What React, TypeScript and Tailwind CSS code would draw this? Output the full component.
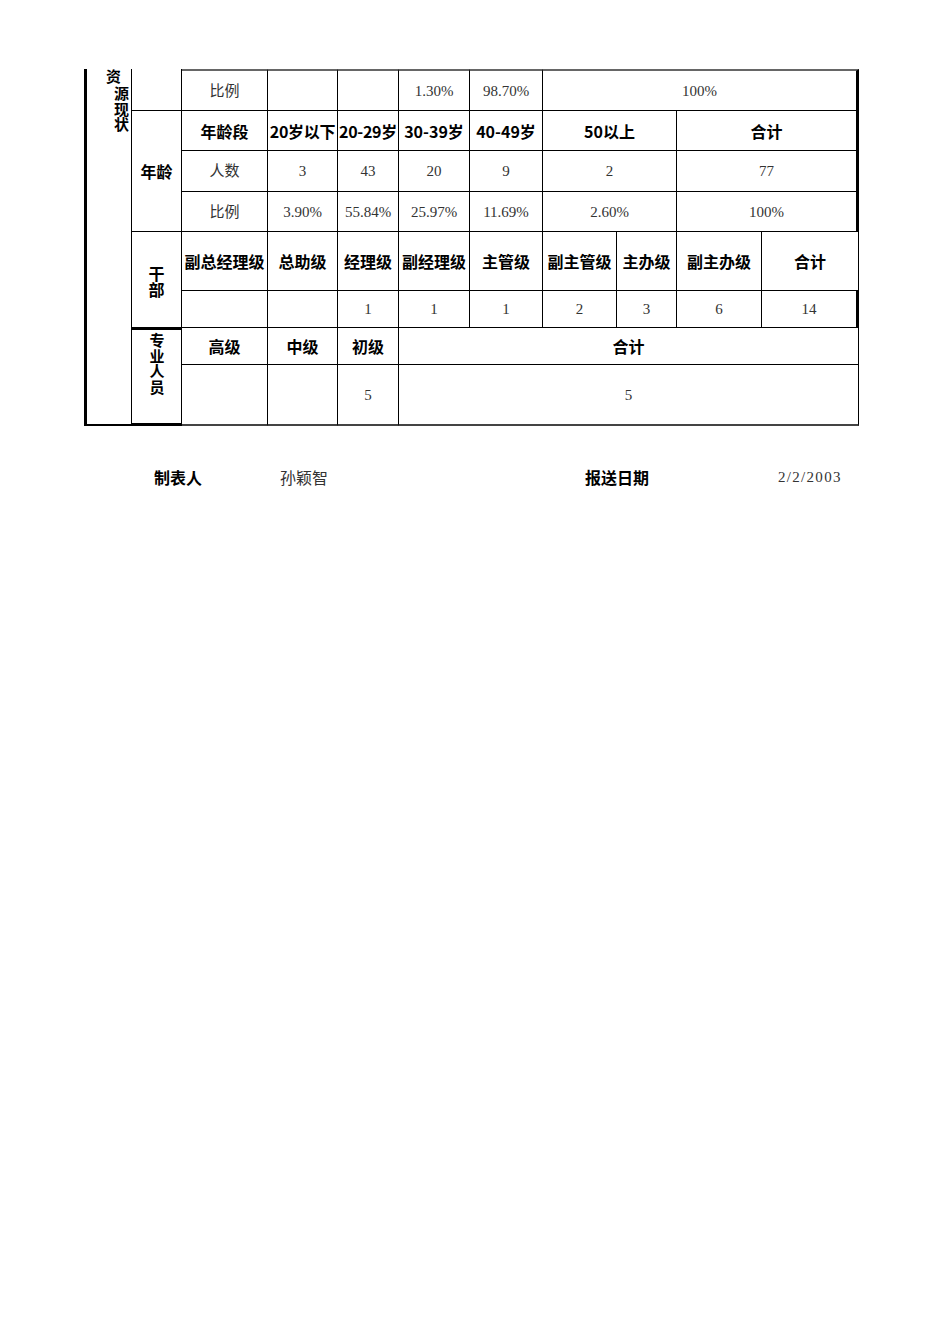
import React from "react";

const H = "font-['Noto_Sans_CJK_SC',sans-serif] font-bold text-[16px] leading-[20px] text-black";
const D = "font-['Liberation_Serif','Noto_Sans_CJK_SC',serif] text-[15px] leading-[20px] text-[#333]";
const B = "border-black border-r border-b flex items-center justify-center";
const V = "[writing-mode:vertical-rl] [text-orientation:upright] font-['Noto_Sans_CJK_SC',sans-serif] font-bold text-[15px] leading-[16px] text-black";

function C({ cls, children, kind = "d" }: { cls: string; children?: React.ReactNode; kind?: "h" | "d" }) {
  return <div className={`${B} ${kind === "h" ? H : D} ${cls}`}>{children}</div>;
}

export default function App() {
  return (
    <div className="w-[950px] h-[1344px] bg-white relative">
      <div className="pt-[69px] pl-[84px]">
        <div className="grid grid-cols-[48px_50px_86px_70px_61px_71px_73px_74px_60px_85px_97px] grid-rows-[42px_40px_41px_40px_59px_37px_37px_61px] w-[775px]">
          {/* left merged column */}
          <div className="col-start-1 row-start-1 row-span-8 border-l-[3px] border-r border-b-2 border-black flex flex-row items-start justify-end pr-[2px]">
            <span className={`${V} mr-[-8px]`}>资</span>
            <span className={`${V} mt-[17px] tracking-[0.5px]`}>源现状</span>
          </div>
          {/* row 1 */}
          <div className="col-start-2 row-start-1 border-r border-b border-black" />
          <C cls="col-start-3 row-start-1 border-t-2 border-t-[#666]">比例</C>
          <C cls="col-start-4 row-start-1 border-t-2 border-t-[#666]" />
          <C cls="col-start-5 row-start-1 border-t-2 border-t-[#666]" />
          <C cls="col-start-6 row-start-1 border-t-2 border-t-[#666]">1.30%</C>
          <C cls="col-start-7 row-start-1 border-t-2 border-t-[#666]">98.70%</C>
          <C cls="col-start-8 col-span-4 row-start-1 border-t-2 border-t-[#666] border-r-[3px]">100%</C>
          {/* 年龄 */}
          <C kind="h" cls="col-start-2 row-start-2 row-span-3">年龄</C>
          <C kind="h" cls="col-start-3 row-start-2">年龄段</C>
          <C kind="h" cls="col-start-4 row-start-2 tracking-[-0.3px]">20岁以下</C>
          <C kind="h" cls="col-start-5 row-start-2 tracking-[-0.3px]">20-29岁</C>
          <C kind="h" cls="col-start-6 row-start-2">30-39岁</C>
          <C kind="h" cls="col-start-7 row-start-2">40-49岁</C>
          <C kind="h" cls="col-start-8 col-span-2 row-start-2">50以上</C>
          <C kind="h" cls="col-start-10 col-span-2 row-start-2 border-r-[3px]">合计</C>

          <C cls="col-start-3 row-start-3">人数</C>
          <C cls="col-start-4 row-start-3">3</C>
          <C cls="col-start-5 row-start-3">43</C>
          <C cls="col-start-6 row-start-3">20</C>
          <C cls="col-start-7 row-start-3">9</C>
          <C cls="col-start-8 col-span-2 row-start-3">2</C>
          <C cls="col-start-10 col-span-2 row-start-3 border-r-[3px]">77</C>

          <C cls="col-start-3 row-start-4">比例</C>
          <C cls="col-start-4 row-start-4">3.90%</C>
          <C cls="col-start-5 row-start-4">55.84%</C>
          <C cls="col-start-6 row-start-4">25.97%</C>
          <C cls="col-start-7 row-start-4">11.69%</C>
          <C cls="col-start-8 col-span-2 row-start-4">2.60%</C>
          <C cls="col-start-10 col-span-2 row-start-4 border-r-[3px]">100%</C>
          {/* 干部 */}
          <div className={`${B} col-start-2 row-start-5 row-span-2 pt-[4px]`}>
            <span className={`${V} text-[16px]`}>干部</span>
          </div>
          <C kind="h" cls="col-start-3 row-start-5">副总经理级</C>
          <C kind="h" cls="col-start-4 row-start-5">总助级</C>
          <C kind="h" cls="col-start-5 row-start-5">经理级</C>
          <C kind="h" cls="col-start-6 row-start-5">副经理级</C>
          <C kind="h" cls="col-start-7 row-start-5">主管级</C>
          <C kind="h" cls="col-start-8 row-start-5">副主管级</C>
          <C kind="h" cls="col-start-9 row-start-5">主办级</C>
          <C kind="h" cls="col-start-10 row-start-5">副主办级</C>
          <C kind="h" cls="col-start-11 row-start-5">合计</C>

          <C cls="col-start-3 row-start-6" />
          <C cls="col-start-4 row-start-6" />
          <C cls="col-start-5 row-start-6">1</C>
          <C cls="col-start-6 row-start-6">1</C>
          <C cls="col-start-7 row-start-6">1</C>
          <C cls="col-start-8 row-start-6">2</C>
          <C cls="col-start-9 row-start-6">3</C>
          <C cls="col-start-10 row-start-6">6</C>
          <C cls="col-start-11 row-start-6 border-r-[3px]">14</C>
          {/* 专业人员 */}
          <div className="border-black border-r border-b-[3px] border-t-2 flex justify-center items-start pt-[3px] col-start-2 row-start-7 row-span-2">
            <span className={`${V} tracking-[0.5px]`}>专业人员</span>
          </div>
          <C kind="h" cls="col-start-3 row-start-7">高级</C>
          <C kind="h" cls="col-start-4 row-start-7">中级</C>
          <C kind="h" cls="col-start-5 row-start-7">初级</C>
          <C kind="h" cls="col-start-6 col-span-6 row-start-7">合计</C>

          <C cls="col-start-3 row-start-8 border-b-2 border-b-[#444]" />
          <C cls="col-start-4 row-start-8 border-b-2 border-b-[#444]" />
          <C cls="col-start-5 row-start-8 border-b-2 border-b-[#444]">5</C>
          <C cls="col-start-6 col-span-6 row-start-8 border-b-2 border-b-[#444]">5</C>
        </div>

        <div className="mt-[41px] flex items-center h-[20px]">
          <div className={`${H} w-[126px] ml-[70px]`}>制表人</div>
          <div className="font-['Noto_Sans_CJK_SC',sans-serif] text-[16px] leading-[20px] text-[#333] w-[305px]">孙颖智</div>
          <div className={`${H} w-[193px]`}>报送日期</div>
          <div className={`${D} tracking-[1.3px]`}>2/2/2003</div>
        </div>
      </div>
    </div>
  );
}
